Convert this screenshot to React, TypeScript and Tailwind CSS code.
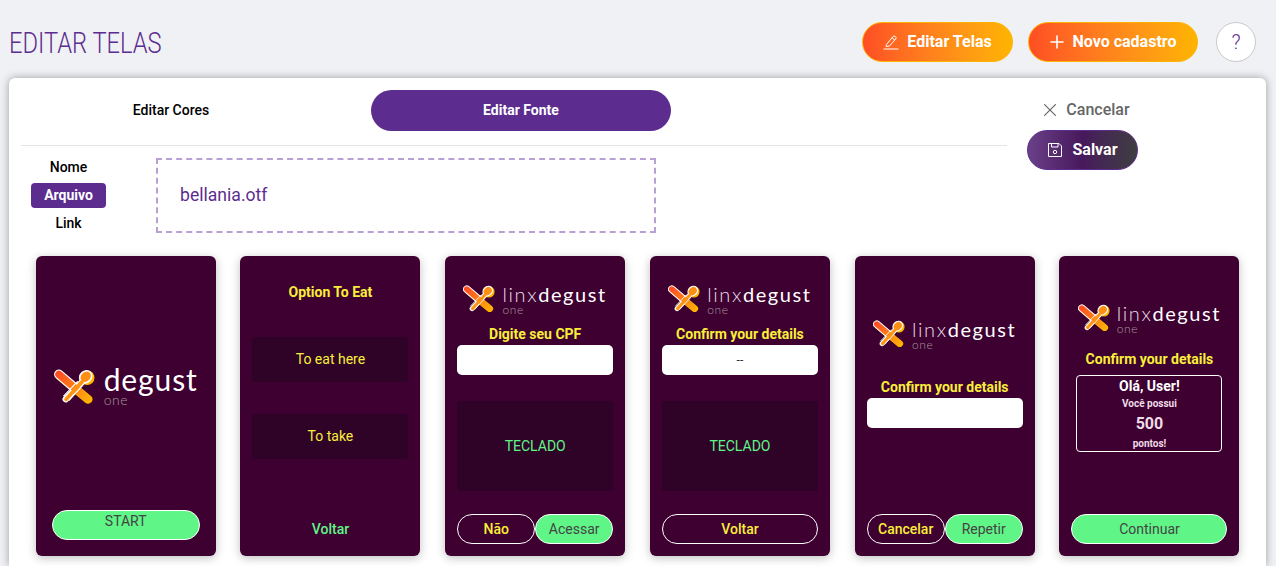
import React from "react";

const font = { fontFamily: "Roboto, 'Liberation Sans', sans-serif" };

function Mark({ w }: { w: number }) {
  const id = React.useId();
  return (
    <svg width={w} height={(w * 36) / 42} viewBox="0 0 42 36" className="shrink-0">
      <defs>
        <linearGradient id={id} gradientUnits="userSpaceOnUse" x1="4" y1="5" x2="33" y2="31">
          <stop offset="0" stopColor="#ff4d24" />
          <stop offset="1" stopColor="#ffa80a" />
        </linearGradient>
      </defs>
      <path d="M6 7 L35 31" stroke="#ffb400" strokeWidth="9" strokeLinecap="round" />
      <circle cx="34" cy="9" r="7.5" fill="#ffb400" />
      <path d="M12 31 L29 13" stroke="#fff" strokeWidth="6.5" strokeLinecap="round" />
      <ellipse cx="32.5" cy="8" rx="7.5" ry="6.5" transform="rotate(-45 32.5 8)" fill="#fff" />
      <ellipse cx="32.5" cy="8" rx="5.8" ry="4.8" transform="rotate(-45 32.5 8)" fill="#ff8f14" />
      <path d="M5 5.5 L22 20" stroke="#fff" strokeWidth="10" strokeLinecap="round" />
      <path d="M5 5.5 L33 29.5" stroke={`url(#${id})`} strokeWidth="7.5" strokeLinecap="round" />
      <path d="M12.5 31 L28.5 13.5" stroke="#ff9412" strokeWidth="4" strokeLinecap="round" />
      <path d="M10 27.5 L24 13" stroke="#fff" strokeWidth="1.2" strokeLinecap="round" />
      <path d="M15.5 32 L30 16" stroke="#fff" strokeWidth="1.2" strokeLinecap="round" />
    </svg>
  );
}

function BigLogo() {
  return (
    <div className="flex items-center gap-[9px]">
      <Mark w={41} />
      <div className="flex flex-col text-white -mt-[3px]" style={{ fontFamily: "Lato, sans-serif" }}>
        <span className="text-[30px] leading-[30px] font-normal tracking-[.9px]">degust</span>
        <span className="text-[14px] leading-[12px] font-light tracking-[.6px] text-[#a8979f]">one</span>
      </div>
    </div>
  );
}

function Logo() {
  return (
    <div className="flex items-center gap-[7px]">
      <Mark w={32} />
      <div className="flex flex-col text-white" style={{ fontFamily: "Lato, sans-serif" }}>
        <span className="text-[20px] leading-[22px] tracking-[1.6px] whitespace-nowrap">
          <span className="font-light text-[#e8dfe6]">linx</span>degust
        </span>
        <span className="text-[12px] leading-[9px] font-light tracking-[.6px] text-[#a8979f]">one</span>
      </div>
    </div>
  );
}

function Phone({ children }: { children: React.ReactNode }) {
  return (
    <div className="w-[180px] h-[300px] shrink-0 rounded-[6px] bg-[#3d0030] shadow-[0_2px_10px_rgba(0,0,0,0.25)] px-[12px] flex flex-col items-center">
      {children}
    </div>
  );
}

const Title = ({ children, className = "" }: { children: React.ReactNode; className?: string }) => (
  <div className={`text-[14px] leading-[16px] font-bold text-[#f9ee3a] text-center whitespace-nowrap ${className}`}>{children}</div>
);

const Outline = ({ children, className = "" }: { children: React.ReactNode; className?: string }) => (
  <div className={`h-[30px] rounded-full border border-white flex items-center justify-center text-[14px] font-medium text-[#f9ee3a] ${className}`}>
    {children}
  </div>
);

const Green = ({ children, className = "" }: { children: React.ReactNode; className?: string }) => (
  <div className={`h-[30px] rounded-full border border-white bg-[#5ff587] flex items-center justify-center text-[14px] text-[#444444] ${className}`}>
    {children}
  </div>
);

const Keyboard = ({ className = "" }: { className?: string }) => (
  <div className={`w-full h-[90px] bg-[#2f0228] rounded-[3px] flex items-center justify-center text-[14px] text-[#5ff587] ${className}`}>
    TECLADO
  </div>
);

const Input = ({ children, className = "" }: { children?: React.ReactNode; className?: string }) => (
  <div className={`w-full h-[30px] bg-white rounded-[5px] flex items-center justify-center text-[12px] text-[#333333] ${className}`}>
    {children}
  </div>
);

export default function App() {
  return (
    <div className="h-[566px] w-[1276px] overflow-hidden bg-[#f0f1f5] flex flex-col" style={font}>
      <header className="h-[78px] shrink-0 flex items-start pl-[9px] pr-[20px]">
        <h1 className="mt-[25px] text-[30px] leading-[36px] font-light text-[#5c2d8f] whitespace-nowrap origin-left scale-x-[.79] w-[152px]">
          EDITAR TELAS
        </h1>
        <div className="ml-auto mt-[22px] flex items-center">
          <button className="w-[151px] h-[40px] rounded-full border border-[#ffb400] bg-gradient-to-r from-[#ff4d24] to-[#ffb400] text-white text-[16px] font-bold flex items-center justify-center gap-[8px]">
            <svg width="16" height="16" viewBox="0 0 16 16" fill="none" stroke="#fff" strokeWidth="1" strokeLinejoin="round">
              <path d="M3.5 10.5 L10 2.5 Q11 1.6 12.3 2.5 Q13.6 3.6 12.8 4.8 L6.5 12 L3 12.5 Z" />
              <path d="M9 3.8 L11.8 6" />
              <path d="M1 15 H15" strokeLinecap="round" />
            </svg>
            Editar Telas
          </button>
          <button className="ml-[15px] w-[170px] h-[40px] rounded-full border border-[#ffb400] bg-gradient-to-r from-[#ff4d24] to-[#ffb400] text-white text-[16px] font-bold flex items-center justify-center gap-[9px]">
            <svg width="14" height="14" viewBox="0 0 14 14" stroke="#fff" strokeWidth="1.6" strokeLinecap="round">
              <path d="M7 1 V13 M1 7 H13" />
            </svg>
            Novo cadastro
          </button>
          <button className="ml-[18px] w-[40px] h-[40px] rounded-full border border-[#c9c9c9] bg-white text-[#5c2d8f] text-[20px] font-light flex items-center justify-center">
            ?
          </button>
        </div>
      </header>

      <main className="ml-[9px] w-[1257px] flex-1 rounded-t-[6px] bg-white shadow-[0_0_8px_rgba(0,0,0,0.35)] pt-[12px] pl-[12px]">
        <div className="flex h-[166px]">
          <div className="w-[986px]">
            <div className="flex gap-[50px]">
              <button className="w-[300px] h-[41px] rounded-full text-[14px] font-medium text-black">Editar Cores</button>
              <button className="w-[300px] h-[41px] rounded-full bg-[#5c2d8f] text-[14px] font-bold text-white">Editar Fonte</button>
            </div>
            <div className="mt-[14px] h-px bg-[#e4e4e6]" />
            <div className="flex mt-[12px]">
              <div className="ml-[10px] w-[75px] flex flex-col items-center text-[14px] font-medium text-black">
                <div className="h-[18px] mb-[7px] flex items-center">Nome</div>
                <div className="h-[25px] w-full rounded-[4px] bg-[#5c2d8f] text-white font-bold flex items-center justify-center">Arquivo</div>
                <div className="h-[30px] flex items-center">Link</div>
              </div>
              <div className="ml-[50px] w-[500px] h-[75px] border-2 border-dashed border-[#b7a0d3] pl-[22px] flex items-center text-[17.6px] text-[#5c2d8f]">
                bellania.otf
              </div>
            </div>
          </div>
          <div className="ml-[20px] w-[111px] flex flex-col items-center">
            <div className="h-[40px] pl-[9px] flex items-center justify-center gap-[10px] text-[16px] font-medium text-[#666666] whitespace-nowrap">
              <svg width="12" height="12" viewBox="0 0 12 12" stroke="#666" strokeWidth="1.2" strokeLinecap="round">
                <path d="M.6 .6 L11.4 11.4 M11.4 .6 L.6 11.4" />
              </svg>
              Cancelar
            </div>
            <button className="w-[111px] h-[40px] rounded-full border border-[#5c2d8f] bg-gradient-to-r from-[#6b4089] via-[#47185c] to-[#3e3d40] text-white text-[16px] font-bold flex items-center justify-center gap-[9px]">
              <svg width="16" height="16" viewBox="0 0 16 16" fill="none" stroke="#fff" strokeWidth="1" strokeLinejoin="round">
                <path d="M1.5 1.5 H12 L14.5 4 V14.5 H1.5 Z" />
                <path d="M4.5 1.5 V5 H11 V1.5" />
                <circle cx="8" cy="10" r="1.7" />
              </svg>
              Salvar
            </button>
          </div>
        </div>

        <div className="ml-[14.7px] flex gap-[24.75px]">
          <Phone>
            <div className="mt-[111px]"><BigLogo /></div>
            <Green className="w-[148px] mt-auto mb-[16px] !items-start">START</Green>
          </Phone>
          <Phone>
            <Title className="mt-[28px]">Option To Eat</Title>
            <div className="mt-[37px] w-full h-[45px] rounded-[4px] bg-[#2f0228] flex items-center justify-center text-[14px] text-[#f9ee3a]">To eat here</div>
            <div className="mt-[32px] w-full h-[45px] rounded-[4px] bg-[#2f0228] flex items-center justify-center text-[14px] text-[#f9ee3a]">To take</div>
            <div className="mt-[62px] text-[14px] leading-[16px] font-medium text-[#5ff587]">Voltar</div>
          </Phone>
          <Phone>
            <div className="mt-[27px]"><Logo /></div>
            <Title className="mt-[12px]">Digite seu CPF</Title>
            <Input className="mt-[3px]" />
            <Keyboard className="mt-[26px]" />
            <div className="mt-[23px] w-full flex">
              <Outline className="w-1/2">Não</Outline>
              <Green className="w-1/2">Acessar</Green>
            </div>
          </Phone>
          <Phone>
            <div className="mt-[27px]"><Logo /></div>
            <Title className="mt-[12px]">Confirm your details</Title>
            <Input className="mt-[3px]">--</Input>
            <Keyboard className="mt-[26px]" />
            <Outline className="mt-[23px] w-full">Voltar</Outline>
          </Phone>
          <Phone>
            <div className="mt-[62px]"><Logo /></div>
            <Title className="mt-[30px]">Confirm your details</Title>
            <Input className="mt-[3px]" />
            <div className="mt-auto mb-[12px] w-full flex">
              <Outline className="w-1/2">Cancelar</Outline>
              <Green className="w-1/2">Repetir</Green>
            </div>
          </Phone>
          <Phone>
            <div className="mt-[46px]"><Logo /></div>
            <Title className="mt-[18px]">Confirm your details</Title>
            <div className="mt-[8px] w-[146px] h-[77px] rounded-[4px] border border-white flex flex-col items-center text-white font-bold">
              <div className="text-[14px] leading-[20px]">Olá, User!</div>
              <div className="text-[10px] leading-[14px] mt-[1px] text-[#f1dce8]">Você possui</div>
              <div className="text-[16px] leading-[24px] mt-[1px] text-[#f1dce8]">500</div>
              <div className="text-[10px] leading-[16px] text-[#f1dce8]">pontos!</div>
            </div>
            <Green className="mt-auto mb-[12px] w-full">Continuar</Green>
          </Phone>
        </div>
      </main>
    </div>
  );
}
